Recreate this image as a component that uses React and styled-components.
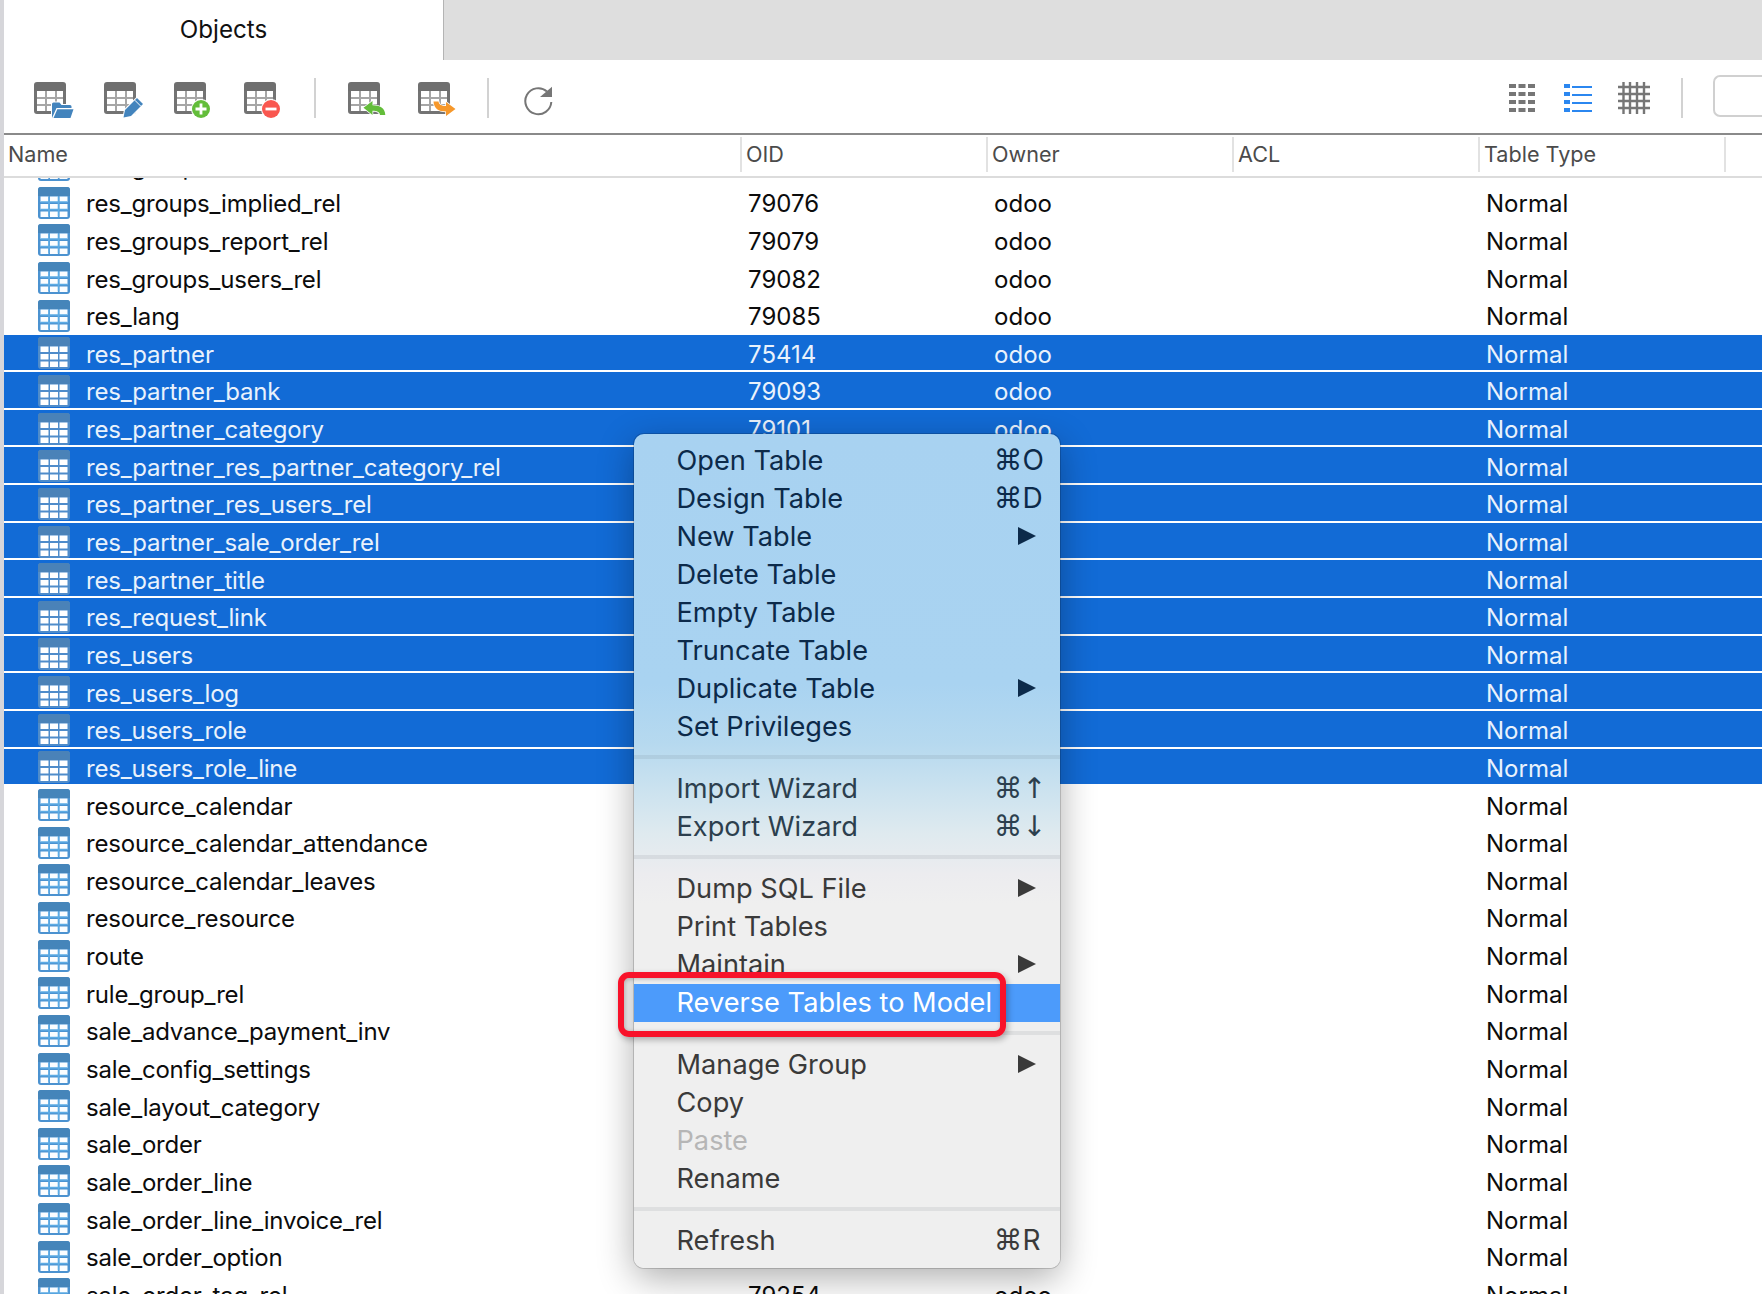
import React from 'react';
import styled, { createGlobalStyle, css } from 'styled-components';

const Global = createGlobalStyle`
  html, body { margin: 0; padding: 0; background: #fff; }
  body { font-family: Inter, "Liberation Sans", sans-serif; overflow: hidden; }
  #root { height: 1294px; overflow: hidden; }
  * { box-sizing: border-box; }
`;

const Page = styled.div`
  position: relative; width: 1762px; height: 1294px; overflow: hidden; background: #fff;
  display: flex; flex-direction: column; border-left: 4px solid #d6d6da;
`;
const TabBar = styled.div`display: flex; height: 60px; background: #dedede; flex: none;`;
const Tab = styled.div`
  width: 440px; background: #fff; border-right: 1px solid #b4b4b4; color: #111;
  font-size: 24.2px; display: flex; align-items: center; justify-content: center; padding-bottom: 1px;
`;
const Toolbar = styled.div`
  flex: none; height: 75px; display: flex; align-items: flex-start; padding: 18px 0 0 30px;
  border-bottom: 2px solid #8a8a8a; overflow: hidden;
`;
const ToolIcon = styled.svg`
  flex: none; width: ${p => p.$w ?? 40}px; height: ${p => p.$h ?? 36}px;
  margin: ${p => p.$top ?? 4}px ${p => p.$gap ?? 30}px 0 0;
`;
const ToolSep = styled.div`flex: none; width: 2px; height: 40px; background: #d2d2d2; margin: 0 ${p => p.$after}px 0 0;`;
const Spacer = styled.div`flex: 1;`;
const SearchBox = styled.div`
  flex: none; width: 49px; height: 42px; margin-top: -3px; border: 2px solid #d0d0d0; border-right: 0;
  border-radius: 7px 0 0 7px;
`;
const Header = styled.div`
  flex: none; display: grid; grid-template-columns: 738px 246px 246px 246px 246px 1fr; height: 43px; padding-top: 2px;
  border-bottom: 2px solid #dcdcdc; color: #4b4b4b; font-size: 21.6px;
`;
const HeaderCell = styled.div`
  height: 35px; padding: 0 0 2px ${p => p.$first ? 4 : 4}px; display: flex; align-items: center;
  border-right: 2px solid ${p => p.$noRule ? 'transparent' : '#e2e2e2'};
`;
const List = styled.div`flex: 1; min-height: 0; overflow: hidden; color: #0c0c0c; font-size: 24px;`;
const Rows = styled.div`margin-top: -31.7px;`;
const Row = styled.div`
  height: 37.65px; display: grid; grid-template-columns: 737px 246px 246px 246px 246px 1fr; align-items: center;
  ${p => p.$selected && css`
    color: #e9f2fc;
    background: linear-gradient(#126bd6, #126bd6) no-repeat top / 100% calc(100% - 2px);
  `}
`;
const NameCell = styled.div`display: flex; align-items: center; padding-left: 34px; gap: 16px; white-space: nowrap;`;
const NameText = styled.span`padding-top: 2px; letter-spacing: -0.2px;`;
const Cell = styled.div`padding: 2px 0 0 7px; white-space: nowrap; letter-spacing: 0.03px;`;
const GridIcon = styled.svg`flex: none; width: 32px; height: 32px;`;

const Menu = styled.div`
  position: absolute; left: 630px; top: 434px; width: 426px; height: 834px; padding-top: 7px;
  border-radius: 10px; box-shadow: 0 10px 36px rgba(0,0,0,.32), 0 0 0 1px rgba(0,0,0,.16);
  background: linear-gradient(180deg, #a8d2f1 0, #a9d3f1 250px, #b6d9ef 310px, #cde3ef 360px, #dfeaef 400px, #ececef 440px, #efefef 470px);
  font-size: 27.2px;
`;
const tones = { blue: '#0c2a4a', mid: '#2c3f4e', dark: '#3a3a3a', off: '#b6b6b6', active: '#fff' };
const Item = styled.div`
  height: 38px; padding: 0 0 ${p => p.$active ? 2 : 0}px 42.5px; position: relative; display: flex; align-items: center; white-space: nowrap;
  color: ${p => tones[p.$tone]};
  ${p => p.$active && css`background: #4c9bfb; margin-top: 1px; margin-bottom: -1px;`}
`;
const Shortcut = styled.span`
  position: absolute; left: 360px; top: 0; height: 38px; display: flex; align-items: center;
  font-family: "DejaVu Sans", sans-serif; font-size: 28.5px; gap: 0;
`;
const ShortcutKey = styled.span`font-family: Inter, sans-serif; font-size: 28px;`;
const Arrow = styled.span`
  position: absolute; left: 384px; top: 10px; width: 0; height: 0;
  border-left: 18px solid currentColor; border-top: 9.5px solid transparent; border-bottom: 9.5px solid transparent;
`;
const MenuSep = styled.div`height: 4px; margin: 10px 0; background: rgba(60,70,80,.09);`;
const Callout = styled.div`
  position: absolute; left: 614px; top: 972px; width: 388px; height: 65px; border: 6px solid #f8122a;
  border-radius: 11px; box-shadow: 2px 3px 6px rgba(0,0,0,.28), inset 1px 1px 4px rgba(0,0,0,.25);
`;

const TableGlyph = () => (
  <>
    <path d="M0 9V3a3 3 0 0 1 3-3h26a3 3 0 0 1 3 3v6z" fill="#6f6f6f" />
    <path d="M0 9h3v20h8V9h2v20h8V9h2v20h6V9h3v20a3 3 0 0 1-3 3H3a3 3 0 0 1-3-3z" fill="#737373" />
    <path d="M3 15h26v2H3zM3 22h26v2H3zM11 9h2v20h-2zM21 9h2v20h-2z" fill="#a6a6a6" />
  </>
);
const Tool = ({ children, gap }) => (
  <ToolIcon viewBox="0 0 40 36" $gap={gap}><TableGlyph />{children}</ToolIcon>
);

const ListGrid = ({ selected }) => (
  <GridIcon viewBox="0 0 32 32">
    <rect width="32" height="32" rx="3" fill={selected ? '#4f8cca' : '#4b92d0'} />
    <path d="M3 0h26a3 3 0 0 1 3 3v6H0V3a3 3 0 0 1 3-3z" fill={selected ? '#4a82b8' : '#4585ba'} />
    {[9.5, 17, 24.5].map(y => [2.5, 12, 21.5].map(x => (
      <rect key={`${x}-${y}`} x={x} y={y} width="8" height="5.5" fill={selected ? '#fff' : '#fbfdff'} />
    )))}
    {!selected && <path d="M2.5 15h27M2.5 22.5h27M11 9.5v20M20.5 9.5v20" stroke="#5cabe4" strokeWidth="1.6" />}
  </GridIcon>
);

const data = [
  ['res_groups', '', '', 0], ['res_groups_implied_rel', '79076', 'odoo', 0], ['res_groups_report_rel', '79079', 'odoo', 0],
  ['res_groups_users_rel', '79082', 'odoo', 0], ['res_lang', '79085', 'odoo', 0],
  ['res_partner', '75414', 'odoo', 1], ['res_partner_bank', '79093', 'odoo', 1], ['res_partner_category', '79101', 'odoo', 1],
  ['res_partner_res_partner_category_rel', '', '', 1], ['res_partner_res_users_rel', '', '', 1], ['res_partner_sale_order_rel', '', '', 1],
  ['res_partner_title', '', '', 1], ['res_request_link', '', '', 1], ['res_users', '', '', 1], ['res_users_log', '', '', 1],
  ['res_users_role', '', '', 1], ['res_users_role_line', '', '', 1],
  ['resource_calendar', '', '', 0], ['resource_calendar_attendance', '', '', 0], ['resource_calendar_leaves', '', '', 0],
  ['resource_resource', '', '', 0], ['route', '', '', 0], ['rule_group_rel', '', '', 0], ['sale_advance_payment_inv', '', '', 0],
  ['sale_config_settings', '', '', 0], ['sale_layout_category', '', '', 0], ['sale_order', '', '', 0], ['sale_order_line', '', '', 0],
  ['sale_order_line_invoice_rel', '', '', 0], ['sale_order_option', '', '', 0], ['sale_order_tag_rel', '79254', 'odoo', 0],
];

const menu = [
  [['Open Table', 'blue', 'O'], ['Design Table', 'blue', 'D'], ['New Table', 'blue', null, true], ['Delete Table', 'blue'], ['Empty Table', 'blue'],
   ['Truncate Table', 'blue'], ['Duplicate Table', 'blue', null, true], ['Set Privileges', 'blue']],
  [['Import Wizard', 'mid', '↑'], ['Export Wizard', 'mid', '↓']],
  [['Dump SQL File', 'dark', null, true], ['Print Tables', 'dark'], ['Maintain', 'dark', null, true], ['Reverse Tables to Model', 'active']],
  [['Manage Group', 'dark', null, true], ['Copy', 'dark'], ['Paste', 'off'], ['Rename', 'dark']],
  [['Refresh', 'dark', 'R']],
];

export default function App() {
  return (
    <Page>
      <Global />
      <TabBar><Tab>Objects</Tab></TabBar>
      <Toolbar>
        <Tool>
          <path d="M17 36V21.500a2 2 0 0 1 2-2h7l2 2.500h8a2 2 0 0 1 2 2V36z" fill="#fff" />
          <path d="M18 36V22a1.500 1.500 0 0 1 1.500-1.500h6l2 2.500h8.500a1.500 1.500 0 0 1 1.500 1.500V26H22.500z" fill="#4384bd" />
          <path d="M19.500 36l3.800-8.800H39.500L36.500 36z" fill="#4384bd" />
        </Tool>
        <Tool>
          <path d="M18.500 36l1.500-8.500L32.500 15l7.500 7.500L27.500 35z" fill="#fff" />
          <path d="M19.500 35.500l1.500-7.500L33 16l6 6L27 34z" fill="#4384bd" />
          <path d="M30.800 18.200l6 6" stroke="#fff" strokeWidth="1" />
        </Tool>
        <Tool>
          <circle cx="27" cy="27" r="10" fill="#fff" />
          <circle cx="27" cy="27" r="9" fill="#63bd3a" />
          <path d="M21.500 27h11M27 21.500v11" stroke="#fff" strokeWidth="2.800" />
        </Tool>
        <Tool>
          <circle cx="27" cy="27" r="10" fill="#fff" />
          <circle cx="27" cy="27" r="9" fill="#f9574f" />
          <path d="M21.500 27h11" stroke="#fff" strokeWidth="2.800" />
        </Tool>
        <ToolSep $after={32} />
        <Tool>
          <path d="M15.500 25.800L24.500 19v4.200c7.500 0 12.500 2.800 12.800 9.800h-5.300c-.4-3.200-3-4.200-7.500-4.200v4.200z" fill="#63bd3a" stroke="#fff" strokeWidth="1.500" paintOrder="stroke" />
        </Tool>
        <Tool gap={29}>
          <path d="M15.500 19.500h5c.4 3 2.800 4.500 7.500 4.500v-4l9.500 7-9.500 7v-4.500c-7.500 0-12-3-12.500-10z" fill="#f6982b" stroke="#fff" strokeWidth="1.500" paintOrder="stroke" />
        </Tool>
        <ToolSep $after={34} />
        <ToolIcon viewBox="0 0 30 30" $w={30} $h={30} $top={8} $gap={0}>
          <path d="M24 5.500A13 13 0 1 0 28.300 16" fill="none" stroke="#767676" strokeWidth="2" />
          <path d="M29 .7V11H17z" fill="#767676" />
        </ToolIcon>
        <Spacer />
        <ToolIcon viewBox="0 0 26 28" $w={26} $h={28} $top={6} $gap={29}>
          {[0, 9.500, 19].map(y => [0, 8, 16, 24].map(v => (
            <rect key={`${y}-${v}`} x={y} y={v} width="7" height="4" fill="#767676" />
          )))}
        </ToolIcon>
        <ToolIcon viewBox="0 0 28 28" $w={28} $h={28} $top={6} $gap={26}>
          {[0, 8, 16, 24].map(v => (
            <g key={v}>
              <rect x="0" y={v} width="6" height="4" fill="#2b87f0" />
              <rect x="8" y={v + 2} width="20" height="2" fill="#2b87f0" />
            </g>
          ))}
        </ToolIcon>
        <ToolIcon viewBox="0 0 32 32" $w={32} $h={32} $gap={31}>
          <path d="M0 5h32M0 12h32M0 19h32M0 26h32M5.500 0v32M12 0v32M19 0v32M26 0v32" stroke="#767676" strokeWidth="2.400" />
        </ToolIcon>
        <ToolSep $after={30} />
        <SearchBox />
      </Toolbar>
      <Header>
        <HeaderCell $first>Name</HeaderCell>
        <HeaderCell>OID</HeaderCell>
        <HeaderCell>Owner</HeaderCell>
        <HeaderCell>ACL</HeaderCell>
        <HeaderCell>Table Type</HeaderCell>
        <HeaderCell $noRule />
      </Header>
      <List>
        <Rows>
          {data.map(([name, oid, owner, sel]) => (
            <Row key={name} $selected={!!sel}>
              <NameCell><ListGrid selected={!!sel} /><NameText>{name}</NameText></NameCell>
              <Cell>{oid}</Cell>
              <Cell>{owner}</Cell>
              <Cell />
              <Cell>Normal</Cell>
              <Cell />
            </Row>
          ))}
        </Rows>
      </List>
      <Menu>
        {menu.map((group, i) => (
          <React.Fragment key={i}>
            {i > 0 && <MenuSep />}
            {group.map(([label, tone, key, sub]) => (
              <Item key={label} $tone={tone} $active={tone === 'active'}>
                {label}
                {key && <Shortcut>⌘{/[A-Z]/.test(key) ? <ShortcutKey>{key}</ShortcutKey> : key}</Shortcut>}
                {sub && <Arrow />}
              </Item>
            ))}
          </React.Fragment>
        ))}
      </Menu>
      <Callout />
    </Page>
  );
}
